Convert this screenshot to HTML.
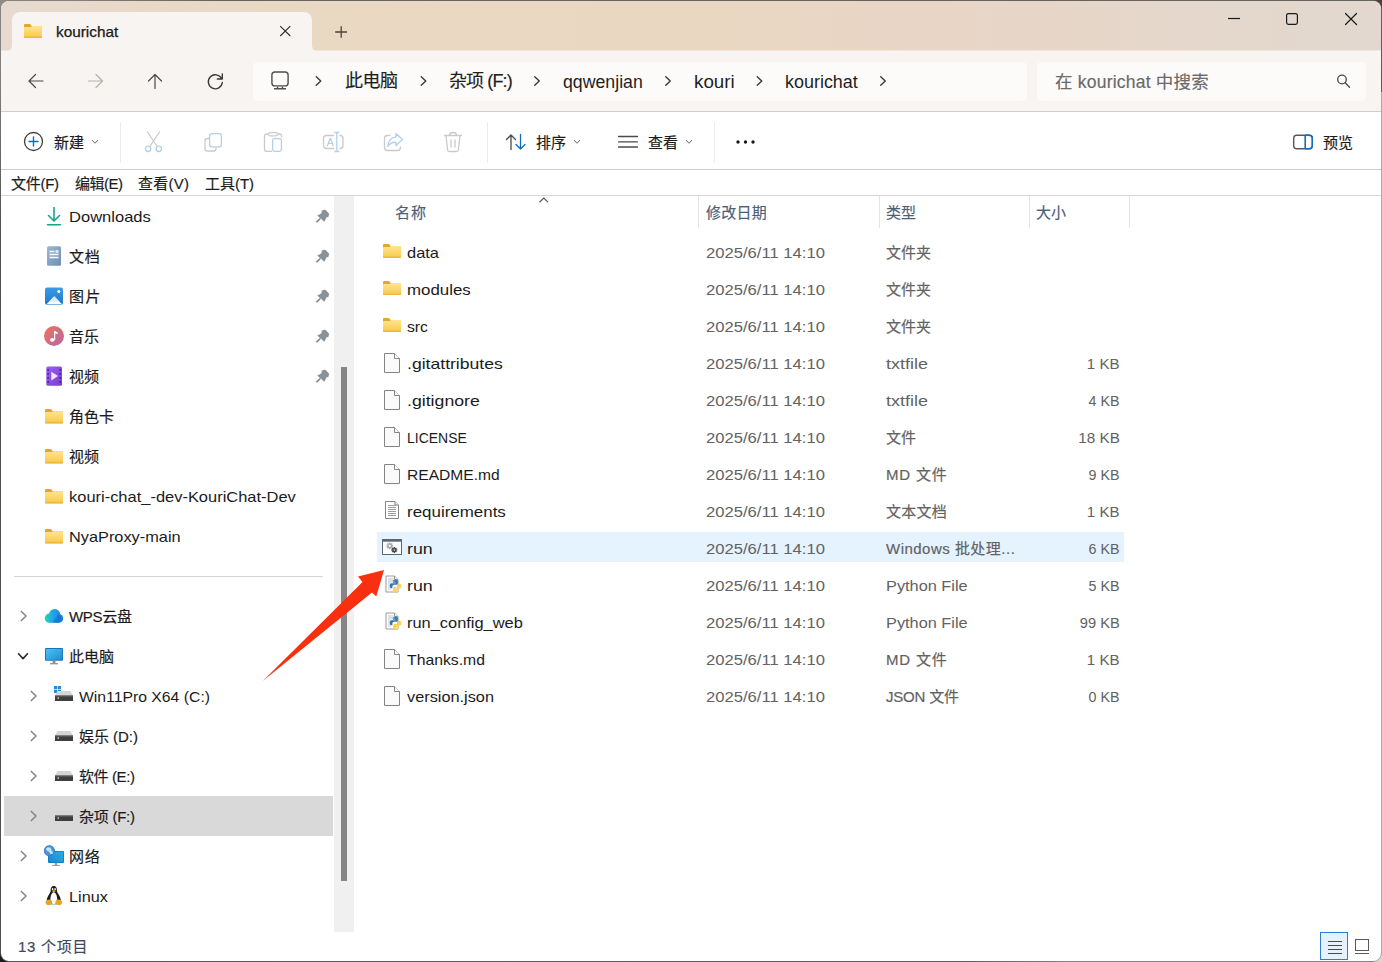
<!DOCTYPE html>
<html lang="zh-CN"><head><meta charset="utf-8"><title>kourichat</title>
<style>
*{box-sizing:border-box;margin:0;padding:0}
html,body{width:1382px;height:962px;overflow:hidden}
body{position:relative;background:radial-gradient(circle at 0 0,#8f8b87 0,#8a8683 70px,rgba(60,55,52,0) 220px),linear-gradient(180deg,#4a423c 0,#2a2623 120px,#1c1a19 300px,#1a1a1a 100%);font-family:"Liberation Sans","Noto Sans CJK SC",sans-serif;}
.abs{position:absolute}
.t{z-index:5;transform-origin:left center;display:inline-block;position:absolute;white-space:nowrap;font-family:"Liberation Sans","Noto Sans CJK SC",sans-serif}
svg{position:absolute;overflow:visible;z-index:4}
#win{position:absolute;left:1px;top:1px;width:1380px;height:960px;border-radius:8px;background:#fff;overflow:hidden}
#title{position:absolute;left:0;top:0;width:1380px;height:50px;background:linear-gradient(90deg,#e6dad0 0%,#e8d9c8 8%,#e9d8c2 25%,#ead7c1 50%,#e9d5c5 65%,#e5d7cb 85%,#e2d8cf 100%)}
#tab{position:absolute;z-index:2;left:11px;top:11px;width:300px;height:40px;background:#f8f4f1;border-radius:8px 8px 0 0}
#addr{position:absolute;left:0;top:49px;width:1380px;height:61px;background:#f8f4f1;border-top:1px solid #f1e7de}
#addrline{position:absolute;left:0;top:110px;width:1380px;height:1px;background:#d2cdc8}
#crumb{position:absolute;left:252px;top:61px;width:774px;height:39px;background:#fdfbfa;border-radius:5px}
#search{position:absolute;left:1036px;top:61px;width:329px;height:39px;background:#fdfbfa;border-radius:5px}
.hline{position:absolute;height:1px;background:#e3e3e3}
.vsep{position:absolute;width:1px;background:#ececec}
#track{position:absolute;left:333px;top:195px;width:20px;height:736px;background:#f0f0f0}
#thumb{position:absolute;left:340px;top:366px;width:6px;height:514px;background:#868686}
#navsel{position:absolute;left:3px;top:795px;width:329px;height:40px;background:#d9d9d9}
#rowsel{position:absolute;left:376px;top:531px;width:747px;height:30px;background:#e5f3ff}

#tab:before,#tab:after{content:"";position:absolute;bottom:0;width:7px;height:7px}
#tab:before{left:-7px;background:radial-gradient(circle at 0 0,rgba(248,244,241,0) 6.5px,#f8f4f1 7.5px)}
#tab:after{right:-7px;background:radial-gradient(circle at 100% 0,rgba(248,244,241,0) 6.5px,#f8f4f1 7.5px)}

#rstrip{position:absolute;left:1381px;top:92px;width:1px;height:870px;background:#dcdcdc}
#win{box-shadow:0 0 0 1px rgba(125,125,125,.55)}

</style></head><body>
<div id="rstrip"></div>
<div id="brcorner" style="position:absolute;left:1368px;top:948px;width:14px;height:14px;background:#d8d8d8"></div>
<div style="position:absolute;left:8px;top:961px;width:1366px;height:1px;background:linear-gradient(90deg,#2a2a2a 0,#3a3a3a 70%,#8a8a8a 78%,#8e8e8e 100%)"></div>
<div id="win">
  <div id="title"></div>
  <div id="tab"></div>
  <div id="addr"></div>
  <div id="addrline"></div>
  <div id="crumb"></div>
  <div id="search"></div>
  <div class="hline" style="left:0;top:168px;width:1380px;background:#cbcbcb"></div>
  <div class="hline" style="left:0;top:194px;width:1380px;background:#d6d6d6"></div>
  <div class="vsep" style="left:119px;top:121px;height:41px"></div>
  <div class="vsep" style="left:486px;top:121px;height:41px"></div>
  <div class="vsep" style="left:713px;top:121px;height:41px"></div>
  <div id="track"></div>
  <div id="thumb"></div>
  <div id="navsel"></div>
  <div class="hline" style="left:13px;top:575px;width:309px;background:#d4d4d4"></div>
  <div id="rowsel"></div>
  <div class="vsep" style="left:697px;top:195px;height:32px;background:#e5e5e5"></div>
  <div class="vsep" style="left:878px;top:195px;height:32px;background:#e5e5e5"></div>
  <div class="vsep" style="left:1028px;top:195px;height:32px;background:#e5e5e5"></div>
  <div class="vsep" style="left:1128px;top:195px;height:32px;background:#e5e5e5"></div>
</div>
<svg width="1382" height="962" viewBox="0 0 1382 962" style="left:0;top:0">
<g transform="translate(24 24) scale(1.0 1.0)"><linearGradient id="fg1" x1="0" y1="0" x2="0" y2="1"><stop offset="0" stop-color="#ffe591"/><stop offset="1" stop-color="#f9c846"/></linearGradient>
<path d="M1 0H6l1.8 2.2H17a1 1 0 0 1 1 1V4H0V1a1 1 0 0 1 1-1z" fill="#e6a627"/>
<path d="M0 3.6C0 3.2 .3 3 .7 3H6.6L8.2 2.1H17.2c.5 0 .8.3.8.8V13c0 .6-.4 1-1 1H1c-.6 0-1-.4-1-1z" fill="url(#fg1)"/>
<path d="M0 13V12.4H18V13c0 .6-.4 1-1 1H1c-.6 0-1-.4-1-1z" fill="#e9b53a" opacity=".8"/></g>
<path d="M280.200 26.100L290.300 36M290.300 26.100L280.200 36" stroke="#2e2e2e" stroke-width="1.100"/>
<path d="M341.200 26.200V37.800M335.200 32H347" stroke="#4a433d" stroke-width="1.300"/>
<path d="M1228 18.500H1240" stroke="#1a1a1a" stroke-width="1.200"/>
<rect x="1286.600" y="13.600" width="10.800" height="10.800" rx="1.800" fill="none" stroke="#1a1a1a" stroke-width="1.200"/>
<path d="M1345.500 13.500L1356.500 24.500M1356.500 13.500L1345.500 24.500" stroke="#1a1a1a" stroke-width="1.200" stroke-linecap="round"/>
<path d="M43 81H29M35.500 74.500L29 81L35.500 87.500" fill="none" stroke="#4a4a4a" stroke-width="1.200" stroke-linecap="round" stroke-linejoin="round"/>
<path d="M88.500 81H102.500M96 74.500L102.500 81L96 87.500" fill="none" stroke="#b5b1ad" stroke-width="1.200" stroke-linecap="round" stroke-linejoin="round"/>
<path d="M155 88.500V74.500M148.500 81L155 74.500L161.500 81" fill="none" stroke="#4a4a4a" stroke-width="1.200" stroke-linecap="round" stroke-linejoin="round"/>
<path d="M221.500 78.500A7 7 0 1 0 222.300 82.500M222.300 74V79H217.300" fill="none" stroke="#3a3a3a" stroke-width="1.400" stroke-linecap="round" stroke-linejoin="round"/>
<rect x="271.900" y="72" width="16.200" height="13.900" rx="3" fill="none" stroke="#4f4f4f" stroke-width="1.400"/><path d="M277.600 86.500V88.500M282.400 86.500V88.500M274 88.800H286" stroke="#4f4f4f" stroke-width="1.400" fill="none"/>
<path d="M316.25 76.68L320.75 81L316.25 85.32" fill="none" stroke="#3a3a3a" stroke-width="1.4" stroke-linecap="round" stroke-linejoin="round"/>
<path d="M421.25 76.68L425.75 81L421.25 85.32" fill="none" stroke="#3a3a3a" stroke-width="1.4" stroke-linecap="round" stroke-linejoin="round"/>
<path d="M534.75 76.68L539.25 81L534.75 85.32" fill="none" stroke="#3a3a3a" stroke-width="1.4" stroke-linecap="round" stroke-linejoin="round"/>
<path d="M665.75 76.68L670.25 81L665.75 85.32" fill="none" stroke="#3a3a3a" stroke-width="1.4" stroke-linecap="round" stroke-linejoin="round"/>
<path d="M757.25 76.68L761.75 81L757.25 85.32" fill="none" stroke="#3a3a3a" stroke-width="1.4" stroke-linecap="round" stroke-linejoin="round"/>
<path d="M880.75 76.68L885.25 81L880.75 85.32" fill="none" stroke="#3a3a3a" stroke-width="1.4" stroke-linecap="round" stroke-linejoin="round"/>
<circle cx="1342" cy="79.500" r="4.300" fill="none" stroke="#4a4a4a" stroke-width="1.300"/><path d="M1345.200 82.800L1349.500 87.200" stroke="#4a4a4a" stroke-width="1.300" stroke-linecap="round"/>
<circle cx="33.500" cy="141.500" r="9" fill="none" stroke="#3d3d3d" stroke-width="1.300"/><path d="M33.500 137V146M29 141.500H38" stroke="#0a6fc2" stroke-width="1.400" stroke-linecap="round"/>
<path d="M92.21 140.312L95 143.288L97.79 140.312" fill="none" stroke="#6e6e6e" stroke-width="1.0" stroke-linecap="round" stroke-linejoin="round"/>
<path d="M574.21 140.312L577 143.288L579.79 140.312" fill="none" stroke="#6e6e6e" stroke-width="1.0" stroke-linecap="round" stroke-linejoin="round"/>
<path d="M686.21 140.312L689 143.288L691.79 140.312" fill="none" stroke="#6e6e6e" stroke-width="1.0" stroke-linecap="round" stroke-linejoin="round"/>
<path d="M147.500 132L157.200 146.500M159.500 132L149.800 146.500" stroke="#cacaca" stroke-width="1.300" stroke-linecap="round"/><circle cx="148.200" cy="148.800" r="2.700" fill="none" stroke="#b3cfea" stroke-width="1.300"/><circle cx="158.800" cy="148.800" r="2.700" fill="none" stroke="#b3cfea" stroke-width="1.300"/>
<path d="M209 138.500H207.500a2.500 2.500 0 0 0-2.500 2.500V148.500a2.500 2.500 0 0 0 2.500 2.500H213.500a2.500 2.500 0 0 0 2.500-2.500V147.500" fill="none" stroke="#cacaca" stroke-width="1.300"/><rect x="209.600" y="133.600" width="11.800" height="13.300" rx="2.500" fill="none" stroke="#b3cfea" stroke-width="1.300"/>
<path d="M272 151.300H266.500a2 2 0 0 1-2-2V136a2 2 0 0 1 2-2H268M278 134H279.500a2 2 0 0 1 2 2V137.500" fill="none" stroke="#cacaca" stroke-width="1.300"/><rect x="268.500" y="132.600" width="9" height="3.200" rx="1.500" fill="none" stroke="#cacaca" stroke-width="1.200"/><rect x="272.600" y="138.600" width="8.800" height="12.800" rx="1.800" fill="none" stroke="#b3cfea" stroke-width="1.300"/>
<path d="M334 135.500H326.500a3 3 0 0 0-3 3V145.500a3 3 0 0 0 3 3H334M339.500 135.500H340a3 3 0 0 1 3 3V145.500a3 3 0 0 1-3 3H339.500" fill="none" stroke="#cacaca" stroke-width="1.300"/><path d="M336.800 132.500V151.500M334.300 132.500H339.300M334.300 151.500H339.300" stroke="#b3cfea" stroke-width="1.300"/><path d="M327.300 146L330.300 138L333.300 146M328.300 143.500H332.300" fill="none" stroke="#b3cfea" stroke-width="1.200" stroke-linejoin="round"/>
<path d="M390.500 135.500H387.500a3 3 0 0 0-3 3V147.500a3 3 0 0 0 3 3H397.500a3 3 0 0 0 3-3V146.500" fill="none" stroke="#cacaca" stroke-width="1.300"/><path d="M396 133.500L402.500 139.500L396 145.500V142.300C392 142 389.500 143.500 387.800 146.500C388.200 141 391 137.300 396 136.800Z" fill="none" stroke="#b3cfea" stroke-width="1.300" stroke-linejoin="round"/>
<path d="M444.500 135.500H461.500M449.500 135.200a3.500 2.700 0 0 1 7 0M446 135.500L447.600 150a1.800 1.800 0 0 0 1.800 1.500H456.600a1.800 1.800 0 0 0 1.800-1.500L460 135.500M451 140V147M455 140V147" fill="none" stroke="#cacaca" stroke-width="1.300" stroke-linecap="round"/>
<path d="M511 149.500V135M506.500 139.500L511 135L515.500 139.500" fill="none" stroke="#4a4a4a" stroke-width="1.300" stroke-linecap="round" stroke-linejoin="round"/><path d="M520.500 134.500V149M516 144.500L520.500 149L525 144.500" fill="none" stroke="#0a6fc2" stroke-width="1.300" stroke-linecap="round" stroke-linejoin="round"/>
<path d="M618.500 136.500H637.500M618.500 141.800H637.500M618.500 147H637.500" stroke="#4a4a4a" stroke-width="1.300" stroke-linecap="round"/>
<circle cx="738" cy="142" r="1.700" fill="#1a1a1a"/><circle cx="745.500" cy="142" r="1.700" fill="#1a1a1a"/><circle cx="753" cy="142" r="1.700" fill="#1a1a1a"/>
<rect x="1293.700" y="135.200" width="18.600" height="13.600" rx="3" fill="none" stroke="#55595f" stroke-width="1.400"/><path d="M1305.200 135V149" stroke="#0a6fc2" stroke-width="1.600"/><path d="M1305.200 135.200H1309.300a3 3 0 0 1 3 3V145.800a3 3 0 0 1-3 3H1305.200" fill="none" stroke="#0a6fc2" stroke-width="1.400"/>
<path d="M54 207.500V220.500M48.500 215.500L54 221L59.500 215.500" fill="none" stroke="#17a589" stroke-width="1.600" stroke-linecap="round" stroke-linejoin="round"/><path d="M47.500 224.700H60.500" stroke="#17a589" stroke-width="1.600" stroke-linecap="round"/>
<linearGradient id="docg" x1="0" y1="0" x2="1" y2="1"><stop offset="0" stop-color="#9db7d6"/><stop offset="1" stop-color="#6d8eb2"/></linearGradient><rect x="47" y="246.300" width="14" height="19.400" rx="1.500" fill="url(#docg)"/><path d="M49.500 251.500H54.500M49.500 254.500H58.500M49.500 257.500H58.500" stroke="#fff" stroke-width="1.300"/><rect x="55.500" y="250.200" width="3" height="2.600" fill="#e9f0f8"/>
<linearGradient id="picg" x1="0" y1="0" x2="0" y2="1"><stop offset="0" stop-color="#3a9be8"/><stop offset="1" stop-color="#1f78c8"/></linearGradient><rect x="45" y="287.500" width="18" height="17.200" rx="2" fill="url(#picg)"/><path d="M46.500 304.200L54.200 296.300L62 304.200Z" fill="#fff"/><path d="M49.200 301.500L54.200 296.300L59.300 301.500Z" fill="#d8e9f8"/><circle cx="58.800" cy="291.500" r="1.500" fill="#fff"/>
<linearGradient id="musg" x1="0" y1="0" x2="1" y2="1"><stop offset="0" stop-color="#ee7458"/><stop offset="1" stop-color="#b767a8"/></linearGradient><circle cx="54" cy="336" r="10" fill="url(#musg)"/><ellipse cx="52.300" cy="339.800" rx="2.300" ry="1.900" fill="#fff"/><path d="M54 339.800V330.800L57.600 332.200V334.200L55.200 333.300V339.800Z" fill="#fff"/>
<linearGradient id="vidg" x1="0" y1="0" x2="1" y2="1"><stop offset="0" stop-color="#9b5cf0"/><stop offset="1" stop-color="#7a3fd0"/></linearGradient><rect x="46.300" y="366.500" width="15.700" height="19.200" rx="1.500" fill="url(#vidg)"/>
<rect x="47.300" y="369" width="1.600" height="1.800" fill="#4d1fa0"/><rect x="59.400" y="369" width="1.600" height="1.800" fill="#4d1fa0"/>
<rect x="47.300" y="373" width="1.600" height="1.800" fill="#4d1fa0"/><rect x="59.400" y="373" width="1.600" height="1.800" fill="#4d1fa0"/>
<rect x="47.300" y="377" width="1.600" height="1.800" fill="#4d1fa0"/><rect x="59.400" y="377" width="1.600" height="1.800" fill="#4d1fa0"/>
<rect x="47.300" y="381" width="1.600" height="1.800" fill="#4d1fa0"/><rect x="59.400" y="381" width="1.600" height="1.800" fill="#4d1fa0"/>
<path d="M51.300 371.800L58 376.100L51.300 380.400Z" fill="#f1e6ff"/>
<g transform="translate(45 409) scale(1.0 1.0357142857142858)"><linearGradient id="fg2" x1="0" y1="0" x2="0" y2="1"><stop offset="0" stop-color="#ffe591"/><stop offset="1" stop-color="#f9c846"/></linearGradient>
<path d="M1 0H6l1.8 2.2H17a1 1 0 0 1 1 1V4H0V1a1 1 0 0 1 1-1z" fill="#e6a627"/>
<path d="M0 3.6C0 3.2 .3 3 .7 3H6.6L8.2 2.1H17.2c.5 0 .8.3.8.8V13c0 .6-.4 1-1 1H1c-.6 0-1-.4-1-1z" fill="url(#fg2)"/>
<path d="M0 13V12.4H18V13c0 .6-.4 1-1 1H1c-.6 0-1-.4-1-1z" fill="#e9b53a" opacity=".8"/></g>
<g transform="translate(45 449) scale(1.0 1.0357142857142858)"><linearGradient id="fg3" x1="0" y1="0" x2="0" y2="1"><stop offset="0" stop-color="#ffe591"/><stop offset="1" stop-color="#f9c846"/></linearGradient>
<path d="M1 0H6l1.8 2.2H17a1 1 0 0 1 1 1V4H0V1a1 1 0 0 1 1-1z" fill="#e6a627"/>
<path d="M0 3.6C0 3.2 .3 3 .7 3H6.6L8.2 2.1H17.2c.5 0 .8.3.8.8V13c0 .6-.4 1-1 1H1c-.6 0-1-.4-1-1z" fill="url(#fg3)"/>
<path d="M0 13V12.4H18V13c0 .6-.4 1-1 1H1c-.6 0-1-.4-1-1z" fill="#e9b53a" opacity=".8"/></g>
<g transform="translate(45 489) scale(1.0 1.0357142857142858)"><linearGradient id="fg4" x1="0" y1="0" x2="0" y2="1"><stop offset="0" stop-color="#ffe591"/><stop offset="1" stop-color="#f9c846"/></linearGradient>
<path d="M1 0H6l1.8 2.2H17a1 1 0 0 1 1 1V4H0V1a1 1 0 0 1 1-1z" fill="#e6a627"/>
<path d="M0 3.6C0 3.2 .3 3 .7 3H6.6L8.2 2.1H17.2c.5 0 .8.3.8.8V13c0 .6-.4 1-1 1H1c-.6 0-1-.4-1-1z" fill="url(#fg4)"/>
<path d="M0 13V12.4H18V13c0 .6-.4 1-1 1H1c-.6 0-1-.4-1-1z" fill="#e9b53a" opacity=".8"/></g>
<g transform="translate(45 529) scale(1.0 1.0357142857142858)"><linearGradient id="fg5" x1="0" y1="0" x2="0" y2="1"><stop offset="0" stop-color="#ffe591"/><stop offset="1" stop-color="#f9c846"/></linearGradient>
<path d="M1 0H6l1.8 2.2H17a1 1 0 0 1 1 1V4H0V1a1 1 0 0 1 1-1z" fill="#e6a627"/>
<path d="M0 3.6C0 3.2 .3 3 .7 3H6.6L8.2 2.1H17.2c.5 0 .8.3.8.8V13c0 .6-.4 1-1 1H1c-.6 0-1-.4-1-1z" fill="url(#fg5)"/>
<path d="M0 13V12.4H18V13c0 .6-.4 1-1 1H1c-.6 0-1-.4-1-1z" fill="#e9b53a" opacity=".8"/></g>
<g transform="translate(316 209)" ><path d="M5.800 1.400L8.300 .7Q9 .5 9.600 1.100L12.700 4.300Q13.200 4.900 13 5.600L12.300 7.900L10.600 8.300L8.300 12.700L1.200 6.500L5.500 4.300Z" fill="#8b9199"/><path d="M3.800 10L.9 12.700" stroke="#80868e" stroke-width="1.700" stroke-linecap="round"/></g>
<g transform="translate(316 249)" ><path d="M5.800 1.400L8.300 .7Q9 .5 9.600 1.100L12.700 4.300Q13.200 4.900 13 5.600L12.300 7.900L10.600 8.300L8.300 12.700L1.200 6.500L5.500 4.300Z" fill="#8b9199"/><path d="M3.800 10L.9 12.700" stroke="#80868e" stroke-width="1.700" stroke-linecap="round"/></g>
<g transform="translate(316 289)" ><path d="M5.800 1.400L8.300 .7Q9 .5 9.600 1.100L12.700 4.300Q13.200 4.900 13 5.600L12.300 7.900L10.600 8.300L8.300 12.700L1.200 6.500L5.500 4.300Z" fill="#8b9199"/><path d="M3.800 10L.9 12.700" stroke="#80868e" stroke-width="1.700" stroke-linecap="round"/></g>
<g transform="translate(316 329)" ><path d="M5.800 1.400L8.300 .7Q9 .5 9.600 1.100L12.700 4.300Q13.200 4.900 13 5.600L12.300 7.900L10.600 8.300L8.300 12.700L1.200 6.500L5.500 4.300Z" fill="#8b9199"/><path d="M3.800 10L.9 12.700" stroke="#80868e" stroke-width="1.700" stroke-linecap="round"/></g>
<g transform="translate(316 369)" ><path d="M5.800 1.400L8.300 .7Q9 .5 9.600 1.100L12.700 4.300Q13.200 4.900 13 5.600L12.300 7.900L10.600 8.300L8.300 12.700L1.200 6.500L5.500 4.300Z" fill="#8b9199"/><path d="M3.800 10L.9 12.700" stroke="#80868e" stroke-width="1.700" stroke-linecap="round"/></g>
<linearGradient id="cldg" gradientUnits="userSpaceOnUse" x1="44.800" y1="0" x2="63.200" y2="0"><stop offset="0" stop-color="#25d6b2"/><stop offset=".42" stop-color="#22a6e6"/><stop offset="1" stop-color="#1a7be0"/></linearGradient><g fill="url(#cldg)"><circle cx="49.400" cy="618.200" r="4.600"/><circle cx="54.600" cy="614.800" r="5.800"/><circle cx="58.800" cy="618.400" r="4.400"/><rect x="49.400" y="618" width="9.400" height="4.800"/></g><path d="M52.500 622.800L58.200 614.600A4.400 4.400 0 0 1 58.800 622.800Z" fill="#1560c4" opacity=".5"/>
<linearGradient id="pcg" x1="0" y1="0" x2="1" y2="1"><stop offset="0" stop-color="#4cc4ee"/><stop offset="1" stop-color="#1c8dd6"/></linearGradient><rect x="45" y="648" width="18" height="12.800" rx="1" fill="#1b74b8"/><rect x="46" y="649" width="16" height="10.800" fill="url(#pcg)"/><path d="M52.500 661H55.500V663H52.500Z" fill="#8a8f94"/><path d="M50 663.200H58V664.300H50Z" fill="#7a7f84"/>
<rect x="54" y="686" width="3.200" height="3.200" fill="#2a8ad8"/><rect x="57.800" y="686" width="3.200" height="3.200" fill="#2a8ad8"/><rect x="54" y="689.800" width="3.200" height="3.200" fill="#2a8ad8"/><rect x="57.800" y="689.800" width="3.200" height="3.200" fill="#2a8ad8"/>
<g transform="translate(55 691)" ><path d="M2.500 0H15.500L18 4.500H0Z" fill="#d6d6d6"/><path d="M0 4.500H18V10H0Z" fill="#3e3e3e"/><path d="M0 4.500H18V5.500H0Z" fill="#6a6a6a"/><rect x="2.500" y="6.500" width="1.500" height="1.200" fill="#e8e8e8"/></g>
<g transform="translate(55 731)" ><path d="M2.500 0H15.500L18 4.500H0Z" fill="#d6d6d6"/><path d="M0 4.500H18V10H0Z" fill="#3e3e3e"/><path d="M0 4.500H18V5.500H0Z" fill="#6a6a6a"/><rect x="2.500" y="6.500" width="1.500" height="1.200" fill="#e8e8e8"/></g>
<g transform="translate(55 771)" ><path d="M2.500 0H15.500L18 4.500H0Z" fill="#d6d6d6"/><path d="M0 4.500H18V10H0Z" fill="#3e3e3e"/><path d="M0 4.500H18V5.500H0Z" fill="#6a6a6a"/><rect x="2.500" y="6.500" width="1.500" height="1.200" fill="#e8e8e8"/></g>
<g transform="translate(55 811)" ><path d="M2.500 0H15.500L18 4.500H0Z" fill="#d6d6d6"/><path d="M0 4.500H18V10H0Z" fill="#3e3e3e"/><path d="M0 4.500H18V5.500H0Z" fill="#6a6a6a"/><rect x="2.500" y="6.500" width="1.500" height="1.200" fill="#e8e8e8"/></g>
<linearGradient id="netg" x1="1" y1="0" x2="0" y2="1"><stop offset="0" stop-color="#2aaee8"/><stop offset="1" stop-color="#1689d0"/></linearGradient><rect x="48" y="851" width="16" height="11.900" rx="1" fill="#1479bd"/><rect x="48.800" y="851.800" width="14.400" height="10.300" fill="url(#netg)"/><path d="M54.700 862.900H57.300V865H54.700Z" fill="#9aa0a6"/><path d="M52.200 864.900H59.800V866H52.200Z" fill="#9aa0a6"/><circle cx="49.400" cy="850.700" r="5.300" fill="#4a97e0"/><path d="M46.300 848.300c1.300-1.400 3.200-1.500 4.300-.3.900 1 .2 2.300 1.300 3.100.9.600 1.300 1.700.6 2.900-1.300.4-2.300-.2-2.700-1.300-.4-1.200-1.300-1.400-2.300-1.700-1.100-.4-1.700-1.500-1.200-2.700z" fill="#d4ebff" opacity=".9"/><circle cx="49.400" cy="850.700" r="5" fill="none" stroke="#2a6fc0" stroke-width=".8"/>
<g transform="translate(45.500 886)">
<path d="M8.300 0C6.100 0 5.100 1.800 5.200 4c.1 1.700-.6 2.800-1.700 4.500C2.200 10.500 1.100 12.700 1.300 15c.1 1.200.8 2.600 2.300 3.200h9.400c1.500-.6 2.200-2 2.300-3.200.2-2.300-.9-4.500-2.200-6.500-1.100-1.700-1.800-2.800-1.700-4.500C11.500 1.800 10.500 0 8.300 0z" fill="#1c1c1c"/>
<path d="M8.300 6.200c-1.300 0-2.200 1.500-2.800 3.400-.6 2-.9 4.200-.3 6.300.4 1.200 1.400 2.100 3.100 2.100s2.700-.9 3.100-2.100c.6-2.100.3-4.300-.3-6.300-.6-1.900-1.500-3.400-2.800-3.400z" fill="#fff"/>
<ellipse cx="7.100" cy="3.200" rx=".8" ry="1.100" fill="#fff"/><ellipse cx="9.600" cy="3.200" rx=".8" ry="1.100" fill="#fff"/>
<path d="M6.600 4.700c.6-.6 2.800-.6 3.400 0 .3.400-.9 1.500-1.700 1.500s-2-1.100-1.700-1.500z" fill="#eaa21c"/>
<ellipse cx="3.300" cy="16.300" rx="3.400" ry="2.700" transform="rotate(-18 3.300 16.300)" fill="#eaa51e"/>
<ellipse cx="13.300" cy="16.300" rx="3.400" ry="2.700" transform="rotate(18 13.300 16.300)" fill="#eaa51e"/>
</g>
<path d="M21.325 611.44L26.075 616L21.325 620.56" fill="none" stroke="#858585" stroke-width="1.55" stroke-linecap="round" stroke-linejoin="round"/>
<path d="M21.325 851.44L26.075 856L21.325 860.56" fill="none" stroke="#858585" stroke-width="1.55" stroke-linecap="round" stroke-linejoin="round"/>
<path d="M21.325 891.44L26.075 896L21.325 900.56" fill="none" stroke="#858585" stroke-width="1.55" stroke-linecap="round" stroke-linejoin="round"/>
<path d="M31.325000000000003 691.44L36.075 696L31.325000000000003 700.56" fill="none" stroke="#858585" stroke-width="1.55" stroke-linecap="round" stroke-linejoin="round"/>
<path d="M31.325000000000003 731.44L36.075 736L31.325000000000003 740.56" fill="none" stroke="#858585" stroke-width="1.55" stroke-linecap="round" stroke-linejoin="round"/>
<path d="M31.325000000000003 771.44L36.075 776L31.325000000000003 780.56" fill="none" stroke="#858585" stroke-width="1.55" stroke-linecap="round" stroke-linejoin="round"/>
<path d="M31.325000000000003 811.44L36.075 816L31.325000000000003 820.56" fill="none" stroke="#858585" stroke-width="1.55" stroke-linecap="round" stroke-linejoin="round"/>
<path d="M18.5 653.8000000000001L23 658.6L27.5 653.8000000000001" fill="none" stroke="#2a2a2a" stroke-width="1.6" stroke-linecap="round" stroke-linejoin="round"/>
<path d="M539.500 202.200L543.800 198L548 202.200" fill="none" stroke="#5a5a5a" stroke-width="1.200"/>
<g transform="translate(383 244) scale(1.0 1.0)"><linearGradient id="fg6" x1="0" y1="0" x2="0" y2="1"><stop offset="0" stop-color="#ffe591"/><stop offset="1" stop-color="#f9c846"/></linearGradient>
<path d="M1 0H6l1.8 2.2H17a1 1 0 0 1 1 1V4H0V1a1 1 0 0 1 1-1z" fill="#e6a627"/>
<path d="M0 3.6C0 3.2 .3 3 .7 3H6.6L8.2 2.1H17.2c.5 0 .8.3.8.8V13c0 .6-.4 1-1 1H1c-.6 0-1-.4-1-1z" fill="url(#fg6)"/>
<path d="M0 13V12.4H18V13c0 .6-.4 1-1 1H1c-.6 0-1-.4-1-1z" fill="#e9b53a" opacity=".8"/></g>
<g transform="translate(383 281) scale(1.0 1.0)"><linearGradient id="fg7" x1="0" y1="0" x2="0" y2="1"><stop offset="0" stop-color="#ffe591"/><stop offset="1" stop-color="#f9c846"/></linearGradient>
<path d="M1 0H6l1.8 2.2H17a1 1 0 0 1 1 1V4H0V1a1 1 0 0 1 1-1z" fill="#e6a627"/>
<path d="M0 3.6C0 3.2 .3 3 .7 3H6.6L8.2 2.1H17.2c.5 0 .8.3.8.8V13c0 .6-.4 1-1 1H1c-.6 0-1-.4-1-1z" fill="url(#fg7)"/>
<path d="M0 13V12.4H18V13c0 .6-.4 1-1 1H1c-.6 0-1-.4-1-1z" fill="#e9b53a" opacity=".8"/></g>
<g transform="translate(383 318) scale(1.0 1.0)"><linearGradient id="fg8" x1="0" y1="0" x2="0" y2="1"><stop offset="0" stop-color="#ffe591"/><stop offset="1" stop-color="#f9c846"/></linearGradient>
<path d="M1 0H6l1.8 2.2H17a1 1 0 0 1 1 1V4H0V1a1 1 0 0 1 1-1z" fill="#e6a627"/>
<path d="M0 3.6C0 3.2 .3 3 .7 3H6.6L8.2 2.1H17.2c.5 0 .8.3.8.8V13c0 .6-.4 1-1 1H1c-.6 0-1-.4-1-1z" fill="url(#fg8)"/>
<path d="M0 13V12.4H18V13c0 .6-.4 1-1 1H1c-.6 0-1-.4-1-1z" fill="#e9b53a" opacity=".8"/></g>
<g transform="translate(384 353)" ><path d="M.5 .5H10.5L15.5 5.5V19.5H.5Z" fill="#fafafa" stroke="#848484" stroke-width="1"/><path d="M10.5 .5V5.5H15.5" fill="#fff" stroke="#848484" stroke-width="1"/></g>
<g transform="translate(384 390)" ><path d="M.5 .5H10.5L15.5 5.5V19.5H.5Z" fill="#fafafa" stroke="#848484" stroke-width="1"/><path d="M10.5 .5V5.5H15.5" fill="#fff" stroke="#848484" stroke-width="1"/></g>
<g transform="translate(384 427)" ><path d="M.5 .5H10.5L15.5 5.5V19.5H.5Z" fill="#fafafa" stroke="#848484" stroke-width="1"/><path d="M10.5 .5V5.5H15.5" fill="#fff" stroke="#848484" stroke-width="1"/></g>
<g transform="translate(384 464)" ><path d="M.5 .5H10.5L15.5 5.5V19.5H.5Z" fill="#fafafa" stroke="#848484" stroke-width="1"/><path d="M10.5 .5V5.5H15.5" fill="#fff" stroke="#848484" stroke-width="1"/></g>
<g transform="translate(384 649)" ><path d="M.5 .5H10.5L15.5 5.5V19.5H.5Z" fill="#fafafa" stroke="#848484" stroke-width="1"/><path d="M10.5 .5V5.5H15.5" fill="#fff" stroke="#848484" stroke-width="1"/></g>
<g transform="translate(384 686)" ><path d="M.5 .5H10.5L15.5 5.5V19.5H.5Z" fill="#fafafa" stroke="#848484" stroke-width="1"/><path d="M10.5 .5V5.5H15.5" fill="#fff" stroke="#848484" stroke-width="1"/></g>
<g transform="translate(385 501)" ><path d="M.5 .5H10L13.5 4V17.5H.5Z" fill="#fff" stroke="#848484" stroke-width="1"/><path d="M10 .5V4H13.5" fill="#f4f4f4" stroke="#848484" stroke-width="1"/><path d="M3 4.5H11" stroke="#9a9a9a" stroke-width="1"/><path d="M3 6.5H11" stroke="#9a9a9a" stroke-width="1"/><path d="M3 8.5H11" stroke="#9a9a9a" stroke-width="1"/><path d="M3 10.5H11" stroke="#9a9a9a" stroke-width="1"/><path d="M3 12.5H11" stroke="#9a9a9a" stroke-width="1"/><path d="M3 14.5H11" stroke="#9a9a9a" stroke-width="1"/></g>
<g transform="translate(382 539)" ><rect x=".5" y=".5" width="19" height="15" fill="#fbfcfd" stroke="#5e6770" stroke-width="1"/><path d="M.5 1.800H19.500" stroke="#5e6770" stroke-width="1.800"/><line x1="9.80" y1="6.80" x2="11.20" y2="6.80" stroke="#a8a8a8" stroke-width="1.3"/><line x1="9.21" y1="8.21" x2="10.20" y2="9.20" stroke="#a8a8a8" stroke-width="1.3"/><line x1="7.80" y1="8.80" x2="7.80" y2="10.20" stroke="#a8a8a8" stroke-width="1.3"/><line x1="6.39" y1="8.21" x2="5.40" y2="9.20" stroke="#a8a8a8" stroke-width="1.3"/><line x1="5.80" y1="6.80" x2="4.40" y2="6.80" stroke="#a8a8a8" stroke-width="1.3"/><line x1="6.39" y1="5.39" x2="5.40" y2="4.40" stroke="#a8a8a8" stroke-width="1.3"/><line x1="7.80" y1="4.80" x2="7.80" y2="3.40" stroke="#a8a8a8" stroke-width="1.3"/><line x1="9.21" y1="5.39" x2="10.20" y2="4.40" stroke="#a8a8a8" stroke-width="1.3"/><circle cx="7.8" cy="6.8" r="1.9" fill="none" stroke="#a8a8a8" stroke-width="1.5"/><line x1="13.90" y1="11.00" x2="15.30" y2="11.00" stroke="#3e4650" stroke-width="1.3"/><line x1="13.43" y1="12.13" x2="14.42" y2="13.12" stroke="#3e4650" stroke-width="1.3"/><line x1="12.30" y1="12.60" x2="12.30" y2="14.00" stroke="#3e4650" stroke-width="1.3"/><line x1="11.17" y1="12.13" x2="10.18" y2="13.12" stroke="#3e4650" stroke-width="1.3"/><line x1="10.70" y1="11.00" x2="9.30" y2="11.00" stroke="#3e4650" stroke-width="1.3"/><line x1="11.17" y1="9.87" x2="10.18" y2="8.88" stroke="#3e4650" stroke-width="1.3"/><line x1="12.30" y1="9.40" x2="12.30" y2="8.00" stroke="#3e4650" stroke-width="1.3"/><line x1="13.43" y1="9.87" x2="14.42" y2="8.88" stroke="#3e4650" stroke-width="1.3"/><circle cx="12.3" cy="11" r="1.5" fill="none" stroke="#3e4650" stroke-width="1.5"/></g>
<g transform="translate(385.5 575.5)" ><path d="M.5 .5H9L12.500 4V16.500H.5Z" fill="#fff" stroke="#9a9a9a" stroke-width="1"/><path d="M9 .5V4H12.500" fill="#f0f0f0" stroke="#9a9a9a" stroke-width="1"/><path d="M2.5 3.5H8" stroke="#b9c3cf" stroke-width="1"/><path d="M2.5 5.5H8" stroke="#b9c3cf" stroke-width="1"/><path d="M2.5 7.5H6" stroke="#b9c3cf" stroke-width="1"/><path d="M2.5 9.5H5" stroke="#b9c3cf" stroke-width="1"/><path d="M2.5 11.5H5" stroke="#b9c3cf" stroke-width="1"/><path d="M2.5 13.5H5" stroke="#b9c3cf" stroke-width="1"/><g transform="translate(4.300 4) scale(.95 1.06)">
<path d="M5.6 0C3.8 0 3.2 .8 3.2 1.7V3h2.9v.5H1.9C.8 3.5 0 4.3 0 5.9c0 1.6.7 2.4 1.7 2.4h1V6.7c0-1 .8-1.8 1.8-1.8h2.6c.8 0 1.4-.6 1.4-1.4V1.7C8.500 .8 7.600 0 5.600 0z" fill="#3776ab"/>
<circle cx="4.4" cy="1.5" r=".55" fill="#fff"/>
<path d="M6.4 12c1.800 0 2.400-.8 2.400-1.700V9H5.900V8.500h4.200c1.100 0 1.900-.8 1.900-2.400 0-1.600-.7-2.400-1.700-2.400h-1V5.300c0 1-.8 1.800-1.800 1.800H4.900c-.8 0-1.400.6-1.400 1.400v1.800C3.500 11.200 4.400 12 6.400 12z" fill="#ffd43b"/>
<circle cx="7.6" cy="10.500" r=".55" fill="#fff"/></g></g>
<g transform="translate(385.5 612.5)" ><path d="M.5 .5H9L12.500 4V16.500H.5Z" fill="#fff" stroke="#9a9a9a" stroke-width="1"/><path d="M9 .5V4H12.500" fill="#f0f0f0" stroke="#9a9a9a" stroke-width="1"/><path d="M2.5 3.5H8" stroke="#b9c3cf" stroke-width="1"/><path d="M2.5 5.5H8" stroke="#b9c3cf" stroke-width="1"/><path d="M2.5 7.5H6" stroke="#b9c3cf" stroke-width="1"/><path d="M2.5 9.5H5" stroke="#b9c3cf" stroke-width="1"/><path d="M2.5 11.5H5" stroke="#b9c3cf" stroke-width="1"/><path d="M2.5 13.5H5" stroke="#b9c3cf" stroke-width="1"/><g transform="translate(4.300 4) scale(.95 1.06)">
<path d="M5.6 0C3.8 0 3.2 .8 3.2 1.7V3h2.9v.5H1.9C.8 3.5 0 4.3 0 5.9c0 1.6.7 2.4 1.7 2.4h1V6.7c0-1 .8-1.8 1.8-1.8h2.6c.8 0 1.4-.6 1.4-1.4V1.7C8.500 .8 7.600 0 5.600 0z" fill="#3776ab"/>
<circle cx="4.4" cy="1.5" r=".55" fill="#fff"/>
<path d="M6.4 12c1.800 0 2.400-.8 2.400-1.700V9H5.900V8.500h4.200c1.100 0 1.900-.8 1.900-2.400 0-1.600-.7-2.400-1.700-2.400h-1V5.300c0 1-.8 1.800-1.800 1.800H4.900c-.8 0-1.400.6-1.400 1.400v1.800C3.500 11.200 4.400 12 6.400 12z" fill="#ffd43b"/>
<circle cx="7.6" cy="10.500" r=".55" fill="#fff"/></g></g>
<path d="M384 570L358 576.500L362.500 582L262.800 681L372 592.500L376.300 596.500Z" fill="#f9300f"/>
<rect x="1320.500" y="932.500" width="27" height="27" fill="#e5f1fb" stroke="#2b7fd0" stroke-width="1"/><path d="M1328 941.500H1342M1328 945.500H1342M1328 949.500H1342M1328 953.500H1342" stroke="#4a4a4a" stroke-width="1"/>
<rect x="1355.500" y="939.500" width="13" height="11" fill="#fff" stroke="#5a5a5a" stroke-width="1"/><path d="M1355 953.500H1369" stroke="#5a5a5a" stroke-width="1"/>
</svg>
<span class="t" id="t0" style="left:56.3px;top:20.4px;font-size:14.5px;line-height:24px;color:#1a1a1a;-webkit-text-stroke:.25px #1a1a1a;transform:scaleX(1.0572);">kourichat</span>
<span class="t" id="t1" style="left:345px;top:68.9px;font-size:18px;line-height:24px;color:#1f1f1f;-webkit-text-stroke:.18px #1f1f1f;letter-spacing:-0.500px;">此电脑</span>
<span class="t" id="t2" style="left:449px;top:68.9px;font-size:18px;line-height:24px;color:#1f1f1f;-webkit-text-stroke:.18px #1f1f1f;letter-spacing:-0.883px;">杂项 (F:)</span>
<span class="t" id="t3" style="left:563px;top:69.5px;font-size:17.5px;line-height:24px;color:#1f1f1f;transform:scaleX(1.0127);">qqwenjian</span>
<span class="t" id="t4" style="left:694px;top:69.5px;font-size:17.5px;line-height:24px;color:#1f1f1f;transform:scaleX(1.0725);">kouri</span>
<span class="t" id="t5" style="left:785px;top:69.5px;font-size:17.5px;line-height:24px;color:#1f1f1f;transform:scaleX(1.0253);">kourichat</span>
<span class="t" id="t6" style="left:1055px;top:69.5px;font-size:17.5px;line-height:24px;color:#6a6a6a;-webkit-text-stroke:.18px #6a6a6a;letter-spacing:0.219px;">在 kourichat 中搜索</span>
<span class="t" id="t7" style="left:54px;top:130.5px;font-size:15px;line-height:24px;color:#1b1b1b;-webkit-text-stroke:.18px #1b1b1b;letter-spacing:-0.016px;">新建</span>
<span class="t" id="t8" style="left:536px;top:130.5px;font-size:15px;line-height:24px;color:#1b1b1b;-webkit-text-stroke:.18px #1b1b1b;letter-spacing:-0.016px;">排序</span>
<span class="t" id="t9" style="left:648px;top:130.5px;font-size:15px;line-height:24px;color:#1b1b1b;-webkit-text-stroke:.18px #1b1b1b;letter-spacing:-0.016px;">查看</span>
<span class="t" id="t10" style="left:1323px;top:130.5px;font-size:15px;line-height:24px;color:#1b1b1b;-webkit-text-stroke:.18px #1b1b1b;letter-spacing:-0.016px;">预览</span>
<span class="t" id="t11" style="left:11px;top:171.5px;font-size:15px;line-height:24px;color:#1b1b1b;-webkit-text-stroke:.18px #1b1b1b;letter-spacing:-0.289px;">文件(F)</span>
<span class="t" id="t12" style="left:75px;top:171.5px;font-size:15px;line-height:24px;color:#1b1b1b;-webkit-text-stroke:.18px #1b1b1b;letter-spacing:-0.500px;">编辑(E)</span>
<span class="t" id="t13" style="left:138px;top:171.5px;font-size:15px;line-height:24px;color:#1b1b1b;-webkit-text-stroke:.18px #1b1b1b;letter-spacing:0.250px;">查看(V)</span>
<span class="t" id="t14" style="left:205px;top:171.5px;font-size:15px;line-height:24px;color:#1b1b1b;-webkit-text-stroke:.18px #1b1b1b;letter-spacing:-0.039px;">工具(T)</span>
<span class="t" id="t15" style="left:69px;top:204.5px;font-size:15px;line-height:24px;color:#1b1b1b;transform:scaleX(1.1023);">Downloads</span>
<span class="t" id="t16" style="left:69px;top:244.5px;font-size:15px;line-height:24px;color:#1b1b1b;-webkit-text-stroke:.18px #1b1b1b;letter-spacing:0.784px;">文档</span>
<span class="t" id="t17" style="left:69px;top:284.5px;font-size:15px;line-height:24px;color:#1b1b1b;-webkit-text-stroke:.18px #1b1b1b;letter-spacing:1.584px;">图片</span>
<span class="t" id="t18" style="left:69px;top:324.5px;font-size:15px;line-height:24px;color:#1b1b1b;-webkit-text-stroke:.18px #1b1b1b;letter-spacing:-0.016px;">音乐</span>
<span class="t" id="t19" style="left:69px;top:364.5px;font-size:15px;line-height:24px;color:#1b1b1b;-webkit-text-stroke:.18px #1b1b1b;letter-spacing:-0.016px;">视频</span>
<span class="t" id="t20" style="left:69px;top:404.5px;font-size:15px;line-height:24px;color:#1b1b1b;-webkit-text-stroke:.18px #1b1b1b;letter-spacing:-0.008px;">角色卡</span>
<span class="t" id="t21" style="left:69px;top:444.5px;font-size:15px;line-height:24px;color:#1b1b1b;-webkit-text-stroke:.18px #1b1b1b;letter-spacing:-0.016px;">视频</span>
<span class="t" id="t22" style="left:69px;top:484.5px;font-size:15px;line-height:24px;color:#1b1b1b;transform:scaleX(1.0970);">kouri-chat_-dev-KouriChat-Dev</span>
<span class="t" id="t23" style="left:69px;top:524.5px;font-size:15px;line-height:24px;color:#1b1b1b;transform:scaleX(1.0887);">NyaProxy-main</span>
<span class="t" id="t24" style="left:69px;top:604.5px;font-size:15px;line-height:24px;color:#1b1b1b;-webkit-text-stroke:.18px #1b1b1b;letter-spacing:-0.293px;">WPS云盘</span>
<span class="t" id="t25" style="left:69px;top:644.5px;font-size:15px;line-height:24px;color:#1b1b1b;-webkit-text-stroke:.18px #1b1b1b;letter-spacing:-0.008px;">此电脑</span>
<span class="t" id="t26" style="left:79px;top:684.5px;font-size:15px;line-height:24px;color:#1b1b1b;transform:scaleX(1.0500);">Win11Pro X64 (C:)</span>
<span class="t" id="t27" style="left:79px;top:724.5px;font-size:15px;line-height:24px;color:#1b1b1b;-webkit-text-stroke:.18px #1b1b1b;letter-spacing:-0.029px;">娱乐 (D:)</span>
<span class="t" id="t28" style="left:79px;top:764.5px;font-size:15px;line-height:24px;color:#1b1b1b;-webkit-text-stroke:.18px #1b1b1b;letter-spacing:-0.391px;">软件 (E:)</span>
<span class="t" id="t29" style="left:79px;top:804.5px;font-size:15px;line-height:24px;color:#1b1b1b;-webkit-text-stroke:.18px #1b1b1b;letter-spacing:-0.250px;">杂项 (F:)</span>
<span class="t" id="t30" style="left:69px;top:844.5px;font-size:15px;line-height:24px;color:#1b1b1b;-webkit-text-stroke:.18px #1b1b1b;letter-spacing:0.784px;">网络</span>
<span class="t" id="t31" style="left:69px;top:884.5px;font-size:15px;line-height:24px;color:#1b1b1b;transform:scaleX(1.0826);">Linux</span>
<span class="t" id="t32" style="left:18px;top:934.5px;font-size:15px;line-height:24px;color:#3e495d;-webkit-text-stroke:.18px #3e495d;letter-spacing:0.708px;">13 个项目</span>
<span class="t" id="t33" style="left:395px;top:200.5px;font-size:15px;line-height:24px;color:#4c5f7a;-webkit-text-stroke:.18px #4c5f7a;letter-spacing:0.984px;">名称</span>
<span class="t" id="t34" style="left:706px;top:200.5px;font-size:15px;line-height:24px;color:#4c5f7a;-webkit-text-stroke:.18px #4c5f7a;letter-spacing:0.262px;">修改日期</span>
<span class="t" id="t35" style="left:886px;top:200.5px;font-size:15px;line-height:24px;color:#4c5f7a;-webkit-text-stroke:.18px #4c5f7a;letter-spacing:-0.016px;">类型</span>
<span class="t" id="t36" style="left:1036px;top:200.5px;font-size:15px;line-height:24px;color:#4c5f7a;-webkit-text-stroke:.18px #4c5f7a;letter-spacing:-0.016px;">大小</span>
<span class="t" id="t37" style="left:407px;top:240.5px;font-size:15px;line-height:24px;color:#1b1b1b;transform:scaleX(1.0958);">data</span>
<span class="t" id="t38" style="left:706px;top:240.5px;font-size:15px;line-height:24px;color:#626262;transform:scaleX(1.1087);">2025/6/11 14:10</span>
<span class="t" id="t39" style="left:886px;top:240.5px;font-size:15px;line-height:24px;color:#626262;-webkit-text-stroke:.18px #626262;letter-spacing:-0.008px;">文件夹</span>
<span class="t" id="t40" style="left:407px;top:277.5px;font-size:15px;line-height:24px;color:#1b1b1b;transform:scaleX(1.1253);">modules</span>
<span class="t" id="t41" style="left:706px;top:277.5px;font-size:15px;line-height:24px;color:#626262;transform:scaleX(1.1087);">2025/6/11 14:10</span>
<span class="t" id="t42" style="left:886px;top:277.5px;font-size:15px;line-height:24px;color:#626262;-webkit-text-stroke:.18px #626262;letter-spacing:-0.008px;">文件夹</span>
<span class="t" id="t43" style="left:407px;top:314.5px;font-size:15px;line-height:24px;color:#1b1b1b;transform:scaleX(1.0500);">src</span>
<span class="t" id="t44" style="left:706px;top:314.5px;font-size:15px;line-height:24px;color:#626262;transform:scaleX(1.1087);">2025/6/11 14:10</span>
<span class="t" id="t45" style="left:886px;top:314.5px;font-size:15px;line-height:24px;color:#626262;-webkit-text-stroke:.18px #626262;letter-spacing:-0.008px;">文件夹</span>
<span class="t" id="t46" style="left:407px;top:351.5px;font-size:15px;line-height:24px;color:#1b1b1b;transform:scaleX(1.1724);">.gitattributes</span>
<span class="t" id="t47" style="left:706px;top:351.5px;font-size:15px;line-height:24px;color:#626262;transform:scaleX(1.1087);">2025/6/11 14:10</span>
<span class="t" id="t48" style="left:886px;top:351.5px;font-size:15px;line-height:24px;color:#626262;transform:scaleX(1.1995);">txtfile</span>
<span class="t" id="t49" style="right:262.6px;transform-origin:right center;top:351.5px;font-size:15px;line-height:24px;color:#626262;transform:scaleX(1.0044);">1 KB</span>
<span class="t" id="t50" style="left:407px;top:388.5px;font-size:15px;line-height:24px;color:#1b1b1b;transform:scaleX(1.1797);">.gitignore</span>
<span class="t" id="t51" style="left:706px;top:388.5px;font-size:15px;line-height:24px;color:#626262;transform:scaleX(1.1087);">2025/6/11 14:10</span>
<span class="t" id="t52" style="left:886px;top:388.5px;font-size:15px;line-height:24px;color:#626262;transform:scaleX(1.1995);">txtfile</span>
<span class="t" id="t53" style="right:262.6px;transform-origin:right center;top:388.5px;font-size:15px;line-height:24px;color:#626262;transform:scaleX(0.9529);">4 KB</span>
<span class="t" id="t54" style="left:407px;top:425.5px;font-size:15px;line-height:24px;color:#1b1b1b;transform:scaleX(0.9317);">LICENSE</span>
<span class="t" id="t55" style="left:706px;top:425.5px;font-size:15px;line-height:24px;color:#626262;transform:scaleX(1.1087);">2025/6/11 14:10</span>
<span class="t" id="t56" style="left:886px;top:425.5px;font-size:15px;line-height:24px;color:#626262;-webkit-text-stroke:.18px #626262;letter-spacing:-0.016px;">文件</span>
<span class="t" id="t57" style="right:262.6px;transform-origin:right center;top:425.5px;font-size:15px;line-height:24px;color:#626262;transform:scaleX(1.0192);">18 KB</span>
<span class="t" id="t58" style="left:407px;top:462.5px;font-size:15px;line-height:24px;color:#1b1b1b;transform:scaleX(1.0386);">README.md</span>
<span class="t" id="t59" style="left:706px;top:462.5px;font-size:15px;line-height:24px;color:#626262;transform:scaleX(1.1087);">2025/6/11 14:10</span>
<span class="t" id="t60" style="left:886px;top:462.5px;font-size:15px;line-height:24px;color:#626262;-webkit-text-stroke:.18px #626262;letter-spacing:0.825px;">MD 文件</span>
<span class="t" id="t61" style="right:262.6px;transform-origin:right center;top:462.5px;font-size:15px;line-height:24px;color:#626262;transform:scaleX(0.9529);">9 KB</span>
<span class="t" id="t62" style="left:407px;top:499.5px;font-size:15px;line-height:24px;color:#1b1b1b;transform:scaleX(1.1286);">requirements</span>
<span class="t" id="t63" style="left:706px;top:499.5px;font-size:15px;line-height:24px;color:#626262;transform:scaleX(1.1087);">2025/6/11 14:10</span>
<span class="t" id="t64" style="left:886px;top:499.5px;font-size:15px;line-height:24px;color:#626262;-webkit-text-stroke:.18px #626262;letter-spacing:0.262px;">文本文档</span>
<span class="t" id="t65" style="right:262.6px;transform-origin:right center;top:499.5px;font-size:15px;line-height:24px;color:#626262;transform:scaleX(1.0044);">1 KB</span>
<span class="t" id="t66" style="left:407px;top:536.5px;font-size:15px;line-height:24px;color:#1b1b1b;transform:scaleX(1.1871);">run</span>
<span class="t" id="t67" style="left:706px;top:536.5px;font-size:15px;line-height:24px;color:#626262;transform:scaleX(1.1087);">2025/6/11 14:10</span>
<span class="t" id="t68" style="left:886px;top:536.5px;font-size:15px;line-height:24px;color:#626262;-webkit-text-stroke:.18px #626262;letter-spacing:0.483px;">Windows 批处理...</span>
<span class="t" id="t69" style="right:262.6px;transform-origin:right center;top:536.5px;font-size:15px;line-height:24px;color:#626262;transform:scaleX(0.9529);">6 KB</span>
<span class="t" id="t70" style="left:407px;top:573.5px;font-size:15px;line-height:24px;color:#1b1b1b;transform:scaleX(1.1871);">run</span>
<span class="t" id="t71" style="left:706px;top:573.5px;font-size:15px;line-height:24px;color:#626262;transform:scaleX(1.1087);">2025/6/11 14:10</span>
<span class="t" id="t72" style="left:886px;top:573.5px;font-size:15px;line-height:24px;color:#626262;transform:scaleX(1.0877);">Python File</span>
<span class="t" id="t73" style="right:262.6px;transform-origin:right center;top:573.5px;font-size:15px;line-height:24px;color:#626262;transform:scaleX(0.9529);">5 KB</span>
<span class="t" id="t74" style="left:407px;top:610.5px;font-size:15px;line-height:24px;color:#1b1b1b;transform:scaleX(1.0933);">run_config_web</span>
<span class="t" id="t75" style="left:706px;top:610.5px;font-size:15px;line-height:24px;color:#626262;transform:scaleX(1.1087);">2025/6/11 14:10</span>
<span class="t" id="t76" style="left:886px;top:610.5px;font-size:15px;line-height:24px;color:#626262;transform:scaleX(1.0877);">Python File</span>
<span class="t" id="t77" style="right:262.6px;transform-origin:right center;top:610.5px;font-size:15px;line-height:24px;color:#626262;transform:scaleX(0.9786);">99 KB</span>
<span class="t" id="t78" style="left:407px;top:647.5px;font-size:15px;line-height:24px;color:#1b1b1b;transform:scaleX(1.0512);">Thanks.md</span>
<span class="t" id="t79" style="left:706px;top:647.5px;font-size:15px;line-height:24px;color:#626262;transform:scaleX(1.1087);">2025/6/11 14:10</span>
<span class="t" id="t80" style="left:886px;top:647.5px;font-size:15px;line-height:24px;color:#626262;-webkit-text-stroke:.18px #626262;letter-spacing:0.825px;">MD 文件</span>
<span class="t" id="t81" style="right:262.6px;transform-origin:right center;top:647.5px;font-size:15px;line-height:24px;color:#626262;transform:scaleX(1.0044);">1 KB</span>
<span class="t" id="t82" style="left:407px;top:684.5px;font-size:15px;line-height:24px;color:#1b1b1b;transform:scaleX(1.0869);">version.json</span>
<span class="t" id="t83" style="left:706px;top:684.5px;font-size:15px;line-height:24px;color:#626262;transform:scaleX(1.1087);">2025/6/11 14:10</span>
<span class="t" id="t84" style="left:886px;top:684.5px;font-size:15px;line-height:24px;color:#626262;-webkit-text-stroke:.18px #626262;letter-spacing:-0.198px;">JSON 文件</span>
<span class="t" id="t85" style="right:262.6px;transform-origin:right center;top:684.5px;font-size:15px;line-height:24px;color:#626262;transform:scaleX(0.9529);">0 KB</span>
</body></html>
